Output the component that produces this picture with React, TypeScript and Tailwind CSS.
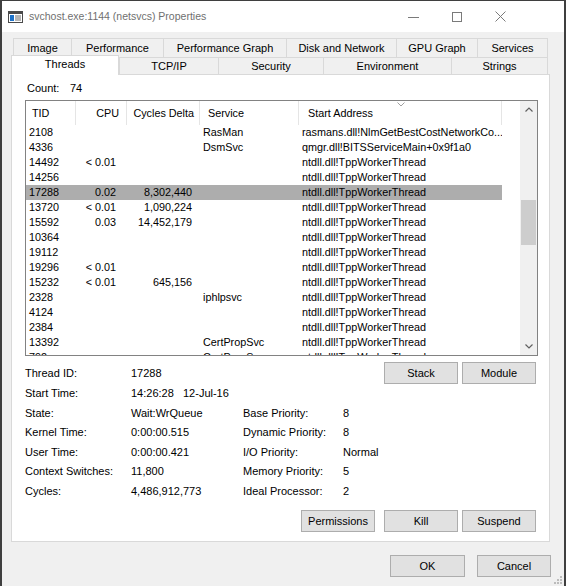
import React from 'react';

type Row = { tid: string; cpu?: string; cyc?: string; svc?: string; addr: string; sel?: boolean };

const W = 'ntdll.dll!TppWorkerThread';

const rows: Row[] = [
  { tid: '2108', svc: 'RasMan', addr: 'rasmans.dll!NlmGetBestCostNetworkCo...' },
  { tid: '4336', svc: 'DsmSvc', addr: 'qmgr.dll!BITSServiceMain+0x9f1a0' },
  { tid: '14492', cpu: '< 0.01', addr: W },
  { tid: '14256', addr: W },
  { tid: '17288', cpu: '0.02', cyc: '8,302,440', addr: W, sel: true },
  { tid: '13720', cpu: '< 0.01', cyc: '1,090,224', addr: W },
  { tid: '15592', cpu: '0.03', cyc: '14,452,179', addr: W },
  { tid: '10364', addr: W },
  { tid: '19112', addr: W },
  { tid: '19296', cpu: '< 0.01', addr: W },
  { tid: '15232', cpu: '< 0.01', cyc: '645,156', addr: W },
  { tid: '2328', svc: 'iphlpsvc', addr: W },
  { tid: '4124', addr: W },
  { tid: '2384', addr: W },
  { tid: '13392', svc: 'CertPropSvc', addr: W },
  { tid: '792', svc: 'CertPropSvc', addr: W },
];

const topTabs = [
  { label: 'Image', w: 'w-[58px]' },
  { label: 'Performance', w: 'w-[92px]' },
  { label: 'Performance Graph', w: 'w-[123px]' },
  { label: 'Disk and Network', w: 'w-[110px]' },
  { label: 'GPU Graph', w: 'w-[81px]' },
  { label: 'Services', w: 'w-[71px] border-r' },
];

const lowTabs = [
  { label: 'TCP/IP', w: 'w-[99px]' },
  { label: 'Security', w: 'w-[105px]' },
  { label: 'Environment', w: 'w-[128px]' },
  { label: 'Strings', w: 'w-[97px] border-r' },
];

const Btn = ({ children, w = 'w-[74px]' }: { children: React.ReactNode; w?: string }) => (
  <div className={`${w} h-[22px] bg-[#e1e1e1] border border-[#adadad] flex items-center justify-center text-[11px] text-black`}>
    {children}
  </div>
);

const Chevron = ({ up }: { up?: boolean }) => (
  <svg width="8" height="5" viewBox="0 0 8 5">
    <path d={up ? 'M0.5 4.5 L4 1 L7.5 4.5' : 'M0.5 0.5 L4 4 L7.5 0.5'} fill="none" stroke="#606060" strokeWidth="1.2" />
  </svg>
);

export default function App() {
  return (
    <div className="relative w-[566px] h-[586px] overflow-hidden bg-[#f0f0f0] border-t border-x-2 border-[#3f3f3f] flex flex-col font-['Liberation_Sans',Arial,sans-serif] text-black">
      {/* title bar */}
      <div className="h-[31px] bg-white flex items-center shrink-0">
        <svg className="ml-[6px]" width="15" height="12" viewBox="0 0 15 12">
          <rect x="0.5" y="0.5" width="14" height="11" fill="#fff" stroke="#4a4a4a" />
          <rect x="1" y="1" width="13" height="2" fill="#4a4a4a" />
          <rect x="2" y="4" width="4" height="6" fill="#1e72c8" />
          <rect x="7" y="4.5" width="6" height="1" fill="#6a6a6a" />
          <rect x="7" y="6.5" width="6" height="1" fill="#6a6a6a" />
          <rect x="7" y="8.5" width="6" height="1" fill="#6a6a6a" />
        </svg>
        <span className="ml-[6px] text-[10.5px] text-[#6f6f6f]">svchost.exe:1144 (netsvcs) Properties</span>
        <div className="ml-auto flex items-center">
          <svg width="11" height="10" viewBox="0 0 11 10">
            <line x1="0" y1="5.5" x2="11" y2="5.5" stroke="#7a7a7a" />
          </svg>
          <svg className="ml-[33px]" width="10" height="10" viewBox="0 0 10 10">
            <rect x="0.5" y="0.5" width="9" height="9" fill="none" stroke="#7a7a7a" />
          </svg>
          <svg className="ml-[33px] mr-[58px]" width="11" height="11" viewBox="0 0 11 11">
            <path d="M0.5 0.5 L10.5 10.5 M10.5 0.5 L0.5 10.5" stroke="#7a7a7a" />
          </svg>
        </div>
      </div>

      {/* tabs */}
      <div className="pl-[9px] pt-[6px] flex flex-col">
        <div className="ml-[2px] flex h-[19px]">
          {topTabs.map((t) => (
            <div key={t.label} className={`${t.w} h-full flex items-center justify-center border-t border-l border-[#d9d9d9] text-[11px]`}>
              {t.label}
            </div>
          ))}
        </div>
        <div className="flex items-end h-[17px]">
          <div className="relative z-10 w-[108px] h-[20px] -mb-px bg-white border-t border-x border-[#d9d9d9] flex items-center justify-center text-[11px] pb-[2px]">
            Threads
          </div>
          {lowTabs.map((t) => (
            <div key={t.label} className={`${t.w} h-[17px] flex items-center justify-center border-t border-l border-[#d9d9d9] text-[11px]`}>
              {t.label}
            </div>
          ))}
        </div>

        {/* tab panel */}
        <div className="w-[539px] h-[468px] bg-white border border-[#d9d9d9] flex flex-col">
          <div className="mt-[6px] ml-[15px] h-[14px] flex items-center text-[11px]">
            <span className="w-[43px]">Count:</span>
            <span>74</span>
          </div>

          {/* thread list */}
          <div className="mt-[5px] ml-[13px] w-[513px] h-[256px] border border-[#828282] flex text-[10.8px]">
            <div className="flex-1 flex flex-col overflow-hidden">
              <div className="h-[24px] flex shrink-0">
                <div className="w-[50px] pl-[6px] flex items-center border-r border-[#e5e5e5]">TID</div>
                <div className="w-[51px] pr-[7px] flex items-center justify-end border-r border-[#e5e5e5]">CPU</div>
                <div className="w-[73px] pr-[5px] flex items-center justify-end border-r border-[#e5e5e5]">Cycles Delta</div>
                <div className="w-[99px] pl-[8px] flex items-center border-r border-[#e5e5e5]">Service</div>
                <div className="relative w-[203px] pl-[9px] flex items-center border-r border-[#e5e5e5]">
                  Start Address
                  <svg className="absolute top-[1px] left-[98px]" width="8" height="5" viewBox="0 0 8 5">
                    <path d="M0.5 0.5 L4 4 L7.5 0.5" fill="none" stroke="#a0a0a0" />
                  </svg>
                </div>
              </div>
              <div className="flex-1 overflow-hidden">
                {rows.map((r) => (
                  <div key={r.tid} className={`w-[476px] h-[15px] leading-[15px] flex whitespace-nowrap ${r.sel ? 'bg-[#adadad]' : ''}`}>
                    <div className="w-[50px] pl-[3px]">{r.tid}</div>
                    <div className="w-[51px] pr-[11px] text-right">{r.cpu}</div>
                    <div className="w-[73px] pr-[8px] text-right">{r.cyc}</div>
                    <div className="w-[99px] pl-[3px]">{r.svc}</div>
                    <div className="w-[203px] pl-[3px] overflow-hidden">{r.addr}</div>
                  </div>
                ))}
              </div>
            </div>
            {/* scrollbar */}
            <div className="w-[17px] bg-[#f0f0f0] flex flex-col">
              <div className="h-[17px] flex items-center justify-center">
                <Chevron up />
              </div>
              <div className="flex-1">
                <div className="mt-[82px] mx-[1px] h-[45px] bg-[#cdcdcd]" />
              </div>
              <div className="h-[17px] flex items-center justify-center">
                <Chevron />
              </div>
            </div>
          </div>

          {/* details */}
          <div className="flex flex-col ml-[13px] mr-[13px] text-[11px]">
            <div className="mt-[6px] h-[22px] flex items-center">
              <span className="w-[106px]">Thread ID:</span>
              <span>17288</span>
              <div className="ml-auto flex gap-[4px]">
                <Btn>Stack</Btn>
                <Btn>Module</Btn>
              </div>
            </div>
            <div className="h-[19px] flex items-center">
              <span className="w-[106px]">Start Time:</span>
              <span>14:26:28&nbsp;&nbsp;&nbsp;12-Jul-16</span>
            </div>
            {[
              ['State:', 'Wait:WrQueue', 'Base Priority:', '8', 'h-[20px]'],
              ['Kernel Time:', '0:00:00.515', 'Dynamic Priority:', '8', 'h-[19px]'],
              ['User Time:', '0:00:00.421', 'I/O Priority:', 'Normal', 'h-[20px]'],
              ['Context Switches:', '11,800', 'Memory Priority:', '5', 'h-[19px]'],
              ['Cycles:', '4,486,912,773', 'Ideal Processor:', '2', 'h-[21px]'],
            ].map(([a, b, c, d, h]) => (
              <div key={a} className={`${h} flex items-center`}>
                <span className="w-[106px]">{a}</span>
                <span className="w-[112px]">{b}</span>
                <span className="w-[100px]">{c}</span>
                <span>{d}</span>
              </div>
            ))}
            <div className="mt-[8px] flex justify-end">
              <Btn>Permissions</Btn>
              <div className="ml-[9px] flex gap-[4px]">
                <Btn>Kill</Btn>
                <Btn>Suspend</Btn>
              </div>
            </div>
          </div>
        </div>
      </div>

      {/* dialog buttons */}
      <div className="mt-[13px] mr-[13px] flex justify-end gap-[12px]">
        <Btn w="w-[75px]">OK</Btn>
        <Btn w="w-[74px]">Cancel</Btn>
      </div>

      <svg className="absolute right-[2px] bottom-[2px]" width="8" height="8" viewBox="0 0 8 8">
        <rect x="6" y="0" width="2" height="2" fill="#bcbcbc" />
        <rect x="3" y="3" width="2" height="2" fill="#bcbcbc" />
        <rect x="6" y="3" width="2" height="2" fill="#bcbcbc" />
        <rect x="0" y="6" width="2" height="2" fill="#bcbcbc" />
        <rect x="3" y="6" width="2" height="2" fill="#bcbcbc" />
        <rect x="6" y="6" width="2" height="2" fill="#bcbcbc" />
      </svg>
    </div>
  );
}
